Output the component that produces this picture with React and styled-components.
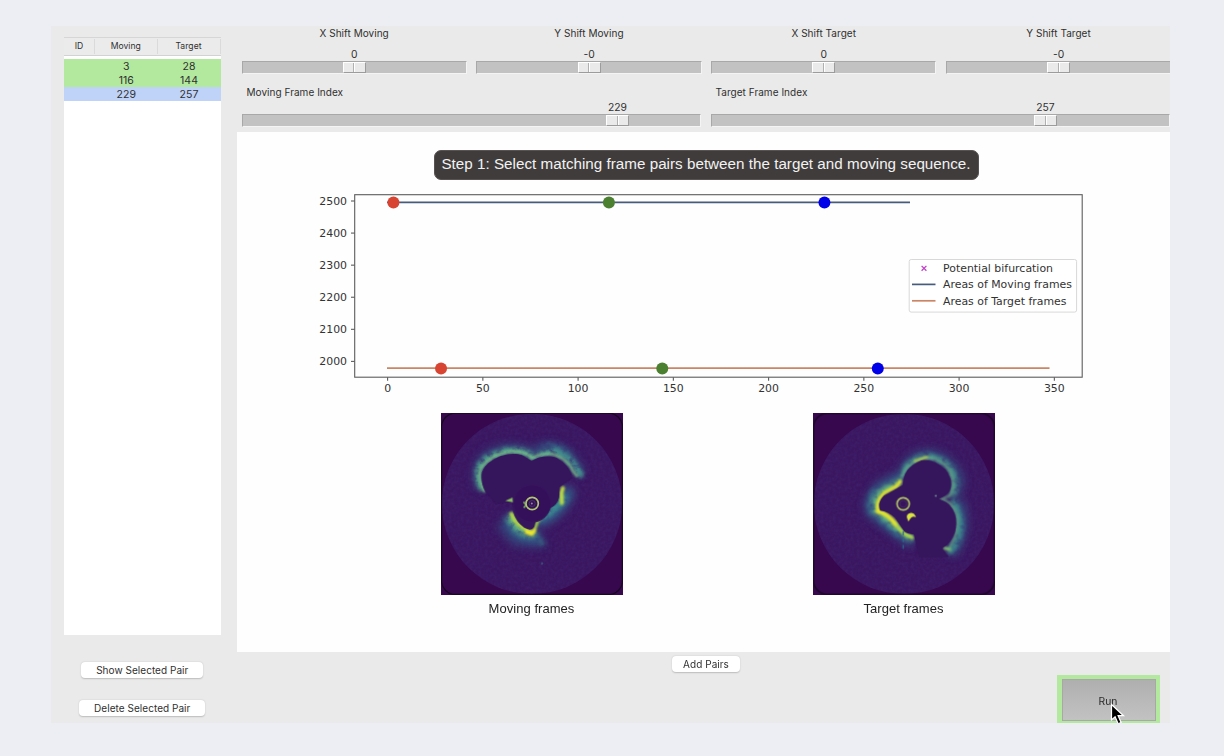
import React from "react";
import styled, { createGlobalStyle } from "styled-components";

const Global = createGlobalStyle`
  * { box-sizing: border-box; }
  body { margin: 0; background: #edeef3; }
`;

const Page = styled.div`
  width: 1224px;
  height: 756px;
  padding: 26px 54px 33px 51px;
  background: #edeef3;
  font-family: Inter, "Liberation Sans", sans-serif;
  font-size: 10px;
  letter-spacing: 0.04px;
  color: #303030;
`;

const Window = styled.div`
  display: flex;
  width: 1119px;
  height: 697px;
  background: #eaeaea;
  overflow: hidden;
`;

const Sidebar = styled.aside`
  display: flex;
  flex-direction: column;
  width: 186px;
  flex: none;
  padding: 11px 16.5px 0 13px;
`;

const PairTable = styled.div`
  height: 598px;
  background: #fff;
  margin-bottom: 27px;
`;

const TableHead = styled.div`
  display: grid;
  grid-template-columns: 31px 62.5px 63px;
  height: 19px;
  padding: 1px 0;
  background: #ebebeb;
  border-top: 1px solid #d6d6d6;
  border-bottom: 1px solid #d2d2d2;
  margin-bottom: 3px;
`;

const HeadCell = styled.div`
  display: flex;
  align-items: center;
  justify-content: center;
  font-size: 8.6px;
  border-right: 1px solid #dadada;
  padding-bottom: 2px;
`;

const TableRow = styled.div`
  display: grid;
  grid-template-columns: 31px 62.5px 63px;
  height: 14px;
  line-height: 15px;
  text-align: center;
  font-size: 10.5px;
  background: ${(p) => (p.$selected ? "#bfd3f8" : "#b2e99e")};
`;

const SideActions = styled.div`
  display: flex;
  flex-direction: column;
  align-items: center;
  gap: 21.5px;
`;

const PushButton = styled.button`
  width: ${(p) => p.$width}px;
  height: 16px;
  padding: 0;
  border: 0;
  border-radius: 4px;
  background: #fff;
  box-shadow: 0 0.5px 1.5px rgba(0, 0, 0, 0.2);
  font: inherit;
  letter-spacing: inherit;
  line-height: 16px;
  color: #303030;
`;

const Main = styled.main`
  display: flex;
  flex-direction: column;
  width: 933px;
  overflow: hidden;
`;

const ShiftRow = styled.div`
  display: flex;
  height: 54px;
`;

const IndexRow = styled.div`
  display: flex;
  height: 52px;
`;

const SliderCell = styled.div`
  display: flex;
  flex-direction: column;
  flex: none;
  width: ${(p) => p.$width}px;
  padding: ${(p) => p.$pad} 5px 0 4.5px;
`;

const SliderLabel = styled.div`
  height: 15px;
  line-height: 15px;
  text-align: ${(p) => p.$align};
  padding-left: ${(p) => (p.$align === "left" ? 5 : 0)}px;
  margin-bottom: ${(p) => p.$gap}px;
`;

const SliderValue = styled.div`
  height: 14px;
  line-height: ${(p) => p.$leading}px;
  width: 40px;
  margin-left: ${(p) => p.$at - 20}px;
  font-size: 10.3px;
  text-align: center;
`;

const Track = styled.div`
  height: 13px;
  border: 1px solid;
  border-color: #a8a8a8 #f4f4f4 #f4f4f4 #a8a8a8;
  background: #c2c2c2;
`;

const Thumb = styled.div`
  display: grid;
  grid-template-columns: 1fr 1fr;
  width: 23px;
  height: 11px;
  margin-left: ${(p) => p.$at - 12.5}px;
  background: #eaeaea;
  border: 1px solid;
  border-color: #fff #9c9c9c #9c9c9c #fff;

  &::before {
    content: "";
    border-right: 1px solid #b0b0b0;
  }
  &::after {
    content: "";
    border-left: 1px solid #fff;
  }
`;

const Canvas = styled.section`
  display: flex;
  flex-direction: column;
  align-items: center;
  height: 520px;
  padding: 18px 0 0 5px;
  background: #fefefe;
`;

const Banner = styled.div`
  width: 545px;
  height: 30px;
  border-radius: 7px;
  background: #403c3b;
  border: 1px solid #575352;
  color: #f2f2f2;
  font: 15.2px/26px "Liberation Sans", Arial, sans-serif;
  letter-spacing: 0.02px;
  text-align: center;
  white-space: nowrap;
`;

const Plot = styled.svg`
  display: block;
  width: 780px;
  height: 215px;
  margin: 4px 0 14px -15px;
  flex: none;
  font-family: "DejaVu Sans", sans-serif;
  font-size: 10.9px;
  letter-spacing: 0;
  fill: #333;
`;

const Frames = styled.div`
  display: flex;
  gap: 190px;
  align-self: flex-start;
  padding-left: 198.5px;
`;

const Frame = styled.figure`
  margin: 0;
  width: 182px;
  text-align: center;
  font: 13px/15px "Liberation Sans", Arial, sans-serif;
  color: #222;
`;

const Scan = styled.svg`
  display: block;
  width: 182px;
  height: 182px;
  margin-bottom: 5.5px;
`;

const BottomBar = styled.footer`
  display: grid;
  grid-template-columns: 1fr auto 1fr;
  height: 71px;
  padding: 4px 10px 0 15px;
`;

const RunFrame = styled.div`
  justify-self: end;
  width: 103px;
  height: 49px;
  margin-top: 18.5px;
  padding: 4.5px 4.5px 2px;
  background: #b2e99e;
`;

const RunButton = styled.button`
  position: relative;
  display: block;
  width: 94px;
  height: 42px;
  padding: 2px 1px 0 0;
  border: 1px solid #a6a9a4;
  background: linear-gradient(#afafaf, #c2c2c2);
  font: inherit;
  font-size: 10.3px;
  color: #2b2b2b;
`;

const Pointer = styled.svg`
  position: absolute;
  left: 47.5px;
  top: 23px;
  width: 16px;
  height: 24px;
`;

const pairs = [
  { moving: 3, target: 28 },
  { moving: 116, target: 144 },
  { moving: 229, target: 257, selected: true },
];

const shifts = [
  { label: "X Shift Moving", value: "0" },
  { label: "Y Shift Moving", value: "-0" },
  { label: "X Shift Target", value: "0" },
  { label: "Y Shift Target", value: "-0" },
];

const px = (v) => 387.6 + v * 1.905;
const py = (v) => 361.4 - (v - 2000) * 0.3208;
const colors = ["#d84432", "#4a802f", "#0000e8"];

function Slider({ width, pad, label, align, gap, leading, value, at }) {
  return (
    <SliderCell $width={width} $pad={pad}>
      <SliderLabel $align={align} $gap={gap}>{label}</SliderLabel>
      <SliderValue $at={at} $leading={leading}>{value}</SliderValue>
      <Track>
        <Thumb $at={at} />
      </Track>
    </SliderCell>
  );
}

function AreaPlot() {
  return (
    <Plot viewBox="309 184 780 215">
      <g stroke="#5c5c5c" strokeWidth="1.1" fill="none">
        <rect x="354.7" y="194.7" width="727.5" height="182.5" />
        {[2000, 2100, 2200, 2300, 2400, 2500].map((v) => (
          <path key={v} d={`M351 ${py(v)}h3.7`} />
        ))}
        {[0, 50, 100, 150, 200, 250, 300, 350].map((v) => (
          <path key={v} d={`M${px(v)} 377.2v3.6`} />
        ))}
      </g>
      {[2000, 2100, 2200, 2300, 2400, 2500].map((v) => (
        <text key={v} x="347" y={py(v) + 3.5} textAnchor="end">{v}</text>
      ))}
      {[0, 50, 100, 150, 200, 250, 300, 350].map((v) => (
        <text key={v} x={px(v)} y="392.3" textAnchor="middle">{v}</text>
      ))}
      <path d="M387 202.3H910" stroke="#475b7c" strokeWidth="1.7" />
      <path d="M387 368.2H1049.5" stroke="#ca8564" strokeWidth="1.7" />
      {pairs.map((p, i) => (
        <g key={i} fill={colors[i]}>
          <circle cx={px(p.moving) + 0.1 + i * 0.25} cy="202.5" r="6" />
          <circle cx={px(p.target) + 0.1 + i * 0.25} cy="368.5" r="6" />
        </g>
      ))}
      <rect x="909.2" y="259.5" width="167.4" height="52.6" rx="2" fill="#fff" stroke="#d8d8d8" />
      <path d="M921.6 265.9l4.800 4.800m0-4.800l-4.800 4.800" stroke="#c040c8" strokeWidth="1.3" />
      <path d="M912 284.4h23.500" stroke="#475b7c" strokeWidth="1.7" />
      <path d="M912 300.8h23.500" stroke="#ca8564" strokeWidth="1.7" />
      <text x="943" y="272" textLength="110">Potential bifurcation</text>
      <text x="943" y="288.4" textLength="129">Areas of Moving frames</text>
      <text x="943" y="304.8" textLength="123.5">Areas of Target frames</text>
    </Plot>
  );
}

function ScanBase({ id, children }) {
  return (
    <Scan viewBox="32 24 547 547">
      <defs>
        <filter id={`${id}-noise`} x="0" y="0" width="100%" height="100%">
          <feTurbulence type="fractalNoise" baseFrequency="0.11" numOctaves="2" seed="4" />
          <feColorMatrix values="0 0 0 0 0.25  0 0 0 0 0.2  0 0 0 0 0.48  0.9 0 0 0 -0.28" />
          <feComposite in2="SourceGraphic" operator="in" />
        </filter>
        <filter id={`${id}-tissue`} x="-30%" y="-30%" width="160%" height="160%">
          <feTurbulence type="fractalNoise" baseFrequency="0.05" numOctaves="3" seed="8" result="n" />
          <feDisplacementMap in="SourceGraphic" in2="n" scale="12" xChannelSelector="R" yChannelSelector="G" result="d" />
          <feGaussianBlur in="d" stdDeviation="6" result="b" />
          <feColorMatrix in="n" values="0 0 0 0 0  0 0 0 0 0  0 0 0 0 0  2 0 0 0 -0.15" result="m" />
          <feComposite in="b" in2="m" operator="in" />
        </filter>
        <filter id={`${id}-soft`} x="-30%" y="-30%" width="160%" height="160%">
          <feGaussianBlur stdDeviation="2" />
        </filter>
        <filter id={`${id}-rim`} x="-30%" y="-30%" width="160%" height="160%">
          <feGaussianBlur stdDeviation="3.8" />
        </filter>
        <filter id={`${id}-haze`} x="-40%" y="-40%" width="180%" height="180%">
          <feGaussianBlur stdDeviation="13" />
        </filter>
      </defs>
      <rect x="32" y="24" width="547" height="547" fill="#37084e" />
      <circle cx="305.500" cy="297" r="271" fill="#3a1661" />
      <circle cx="305.500" cy="297" r="271" fill="#fff" filter={`url(#${id}-noise)`} opacity="0.15" />
      {children}
      <rect x="33.500" y="24.500" width="544" height="545" rx="42" fill="none" stroke="#170920" strokeWidth="4" />
    </Scan>
  );
}

function MovingScan() {
  return (
    <ScanBase id="mv">
      <g fill="none" strokeLinecap="round" strokeLinejoin="round">
        <g filter="url(#mv-haze)" stroke="#31608a">
          <path d="M148 240Q130 190 165 155Q230 112 305 145Q360 105 415 150L450 195" strokeWidth="26" opacity="0.65" />
          <path d="M330 345Q385 325 412 265" strokeWidth="42" opacity="0.95" />
          <path d="M240 345Q255 385 315 400" strokeWidth="36" opacity="0.85" />
          <path d="M215 365L255 410L335 415" strokeWidth="26" opacity="0.55" />
        </g>
        <g filter="url(#mv-tissue)">
          <path d="M156 250Q132 215 150 180Q190 140 250 136Q285 136 305 156" stroke="#4fa38c" strokeWidth="19" />
          <path d="M320 155Q350 142 380 142Q410 150 430 178L452 208" stroke="#459791" strokeWidth="20" />
          <path d="M340 120Q380 112 418 140" stroke="#356d8c" strokeWidth="10" opacity="0.7" />
          <path d="M335 335Q375 315 400 280" stroke="#3d8d90" strokeWidth="24" />
          <path d="M242 335Q255 375 305 390" stroke="#63b383" strokeWidth="20" />
          <path d="M225 340Q245 385 290 405M320 385L338 420" stroke="#37808c" strokeWidth="9" opacity="0.8" />
        </g>
        <g filter="url(#mv-rim)">
          <path d="M162 258Q141 222 151 192Q180 148 240 140Q285 137 305 160Q335 143 370 148Q414 163 430 200L440 212" stroke="#7ec389" strokeWidth="9" opacity="0.75" />
          <path d="M398 250L394 264L395 294" stroke="#c0de42" strokeWidth="12" />
          <path d="M244 327Q254 362 300 380" stroke="#b8da42" strokeWidth="11" />
          <path d="M312 378L322 350L332 335" stroke="#a9d548" strokeWidth="9" />
          <path d="M289 382L304 387L312 378" stroke="#f0e92b" strokeWidth="12" />
        </g>
      </g>
      <path
        d="M166 262Q150 235 155 202Q166 172 210 154Q266 138 290 160L304 168Q338 148 378 158Q422 183 426 221L388 246L387 278Q382 300 360 311L326 326L318 342L312 366Q304 381 282 369Q256 350 249 320L246 291L196 298Z"
        fill="#36135b"
        filter="url(#mv-soft)"
      />
      <circle cx="306" cy="296" r="56" fill="#34105a" stroke="#3a165f" strokeWidth="3" />
      <g filter="url(#mv-soft)">
        <path d="M225 288L247 278L248 292Z" fill="#86bd61" />
        <path d="M280 291l8 9l-7 9" fill="none" stroke="#79b45d" strokeWidth="5" />
        <path d="M333 475l5 2" stroke="#397d8a" strokeWidth="7" opacity="0.6" />
      </g>
      <circle cx="306" cy="296" r="18.500" fill="#321155" stroke="#b1c575" strokeWidth="5" />
      <circle cx="306" cy="296" r="9" fill="none" stroke="#4a2f66" strokeWidth="3" />
      <circle cx="305" cy="296" r="3" fill="#9a80a1" />
    </ScanBase>
  );
}

function TargetScan() {
  return (
    <ScanBase id="tg">
      <g fill="none" strokeLinecap="round" strokeLinejoin="round">
        <g filter="url(#tg-haze)" stroke="#31608a">
          <path d="M300 215Q310 155 375 145Q450 155 475 225L462 270" strokeWidth="26" opacity="0.65" />
          <path d="M475 300Q495 370 455 440" strokeWidth="28" opacity="0.75" />
          <path d="M320 405Q275 370 210 320Q195 290 235 248L285 222" strokeWidth="36" opacity="0.85" />
        </g>
        <g filter="url(#tg-tissue)">
          <path d="M303 210Q320 160 375 152Q425 158 450 195Q466 230 455 268" stroke="#46988f" strokeWidth="16" />
          <path d="M455 292Q480 330 474 380Q466 420 445 440" stroke="#3d8c8f" strokeWidth="18" />
          <path d="M325 398Q275 362 224 320Q208 290 242 258L290 232" stroke="#62b383" strokeWidth="20" />
          <path d="M207 325Q190 290 215 255M235 345L290 392" stroke="#35758c" strokeWidth="12" opacity="0.8" />
        </g>
        <g filter="url(#tg-rim)">
          <path d="M300 215Q310 178 365 157Q418 158 444 200Q463 245 442 273L416 283Q457 292 467 340Q468 390 444 425" stroke="#68b08a" strokeWidth="8" opacity="0.7" />
          <path d="M338 168L375 157" stroke="#b7d94a" strokeWidth="7" />
          <path d="M294 230L284 243L246 264Q220 290 228 316" stroke="#e4e62f" strokeWidth="11" />
          <path d="M226 319Q260 328 283 362" stroke="#e4e62f" strokeWidth="14" />
          <path d="M284 362L304 386L330 398" stroke="#b5da44" strokeWidth="10" />
          <path d="M428 430L443 434" stroke="#7cc273" strokeWidth="10" />
        </g>
      </g>
      <path
        d="M302 240Q301 188 358 166Q395 162 430 194Q456 228 443 258Q431 276 408 282Q432 289 442 300Q471 333 459 382Q447 415 420 431L440 458L350 458L335 389Q317 389 305 379Q290 357 278 338Q258 320 234 317Q223 294 245 272Q264 262 278 254Z"
        fill="#36135b"
        filter="url(#tg-soft)"
      />
      <g filter="url(#tg-soft)">
        <path d="M319 346Q310 329 326 326Q334 325 338 334Q327 331 319 346Z" fill="#dce541" stroke="#dce541" strokeWidth="4" />
        <path d="M303 380V438" stroke="#2d678b" strokeWidth="4" strokeDasharray="12 8" />
        <circle cx="401" cy="273" r="3" fill="#6f8b95" />
      </g>
      <circle cx="303" cy="297" r="18.500" fill="#37145c" stroke="#b1c565" strokeWidth="5" />
      <circle cx="303" cy="297" r="10" fill="none" stroke="#45285f" strokeWidth="3" />
    </ScanBase>
  );
}

export default function App() {
  return (
    <>
      <Global />
      <Page>
        <Window>
          <Sidebar>
            <PairTable>
              <TableHead>
                <HeadCell>ID</HeadCell>
                <HeadCell>Moving</HeadCell>
                <HeadCell>Target</HeadCell>
              </TableHead>
              {pairs.map((p) => (
                <TableRow key={p.moving} $selected={p.selected}>
                  <span />
                  <span>{p.moving}</span>
                  <span>{p.target}</span>
                </TableRow>
              ))}
            </PairTable>
            <SideActions>
              <PushButton $width={122}>Show Selected Pair</PushButton>
              <PushButton $width={126}>Delete Selected Pair</PushButton>
            </SideActions>
          </Sidebar>
          <Main>
            <ShiftRow>
              {shifts.map((s) => (
                <Slider key={s.label} width={234.8} pad="0" label={s.label} align="center" gap={6} leading={15} value={s.value} at={112.8} />
              ))}
            </ShiftRow>
            <IndexRow>
              <Slider width={469} pad="5px" label="Moving Frame Index" align="left" gap={0} leading={14} value="229" at={376} />
              <Slider width={469} pad="5px" label="Target Frame Index" align="left" gap={0} leading={14} value="257" at={335} />
            </IndexRow>
            <Canvas>
              <Banner>Step 1: Select matching frame pairs between the target and moving sequence.</Banner>
              <AreaPlot />
              <Frames>
                <Frame>
                  <MovingScan />
                  Moving frames
                </Frame>
                <Frame>
                  <TargetScan />
                  Target frames
                </Frame>
              </Frames>
            </Canvas>
            <BottomBar>
              <span />
              <PushButton $width={68}>Add Pairs</PushButton>
              <RunFrame>
                <RunButton>
                  Run
                  <Pointer viewBox="0 0 16 24">
                    <path d="M1.500 1.500V17l3.600-3.300 3 7.100 3-1.300-3-6.800H13.500Z" fill="#000" stroke="#fff" strokeWidth="1.200" />
                  </Pointer>
                </RunButton>
              </RunFrame>
            </BottomBar>
          </Main>
        </Window>
      </Page>
    </>
  );
}
